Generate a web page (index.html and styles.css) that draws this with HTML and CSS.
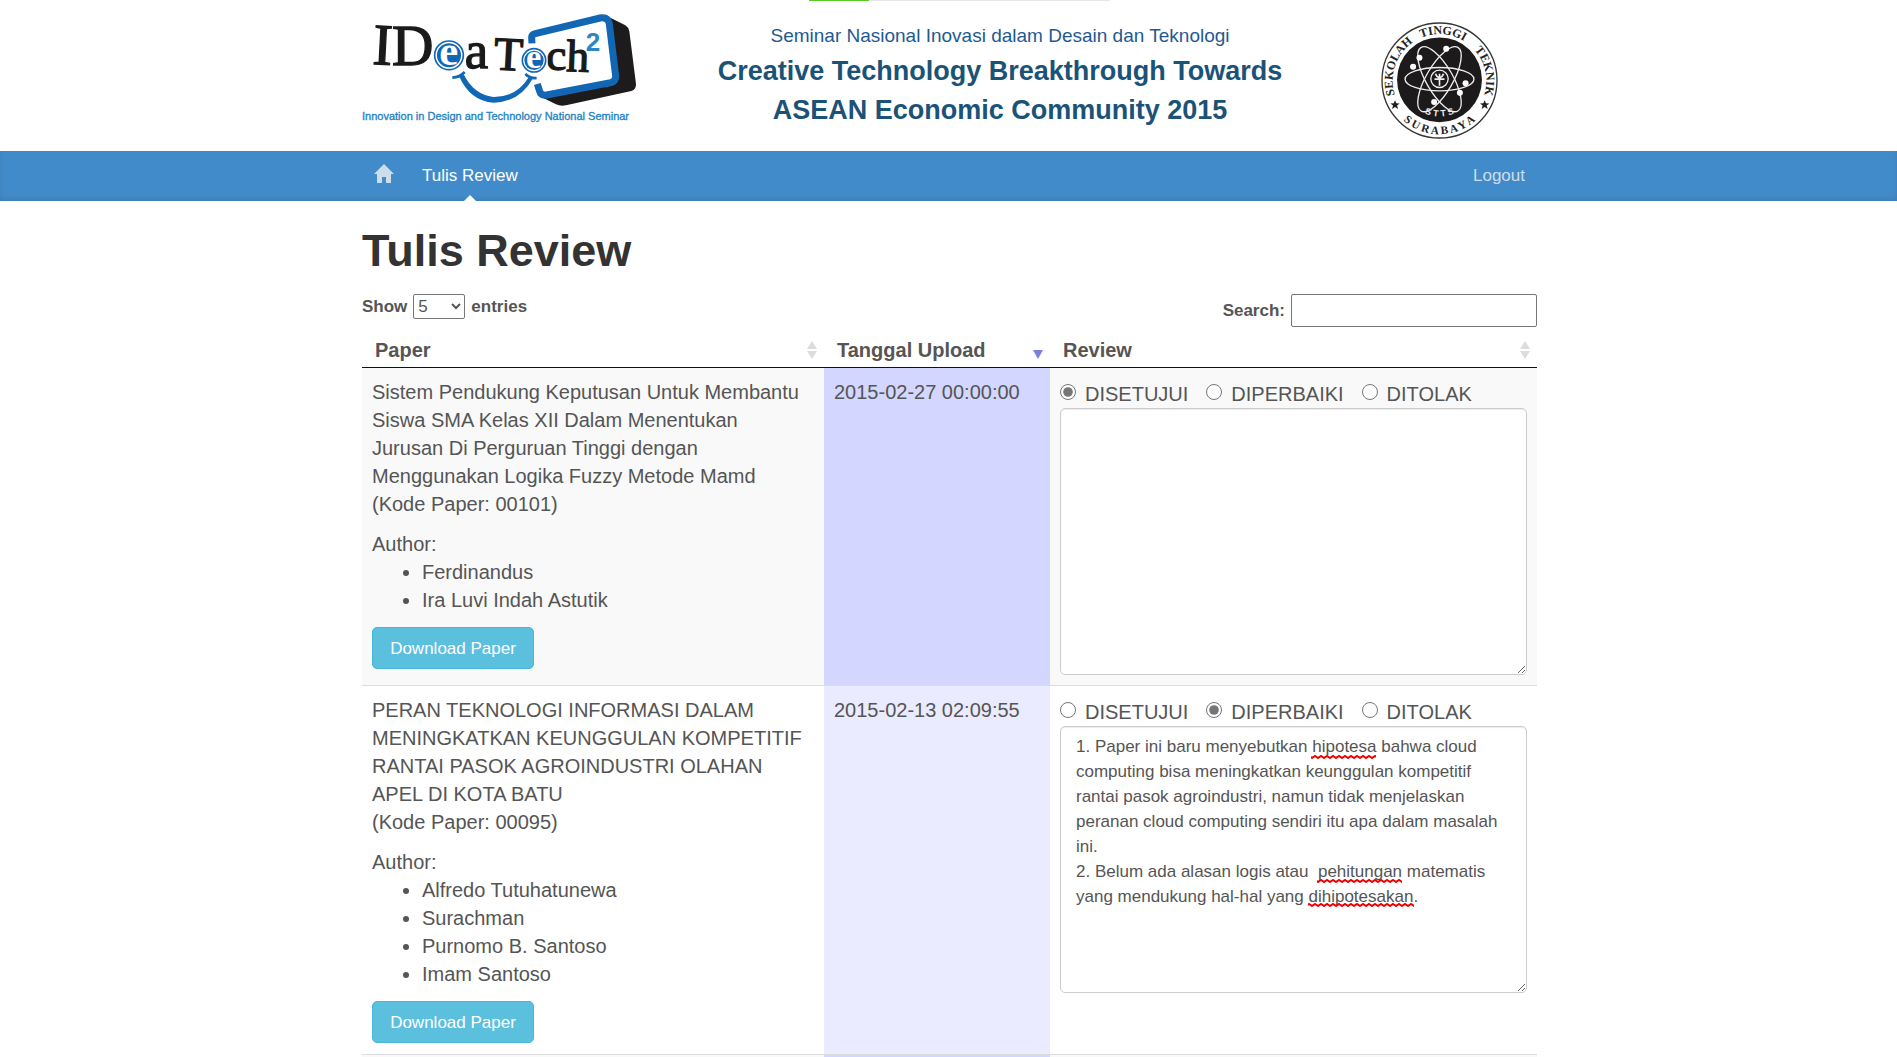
FILE: index.html
```html
<!DOCTYPE html>
<html lang="id">
<head>
<meta charset="utf-8">
<meta name="viewport" content="width=device-width, initial-scale=1">
<title>Tulis Review</title>
<link rel="stylesheet" href="styles.css">
</head>
<body>
<div class="loader"><div class="loader-fill"></div></div>

<header class="container masthead">
  <svg class="logo" viewBox="36 0 840 405" role="img" aria-label="IDeaTech 2">
    <path d="M778 52 L826 76 Q836 82 838 94 L858 252 Q859 268 844 273 L648 316 Q632 320 618 313 L560 284 L780 258 Z" fill="#1d1b1c"/>
    <path d="M544 132 L540 108 Q540 98 552 95 L748 47 Q780 42 785 66 L805 228 Q806 250 788 255 L588 293 Q570 296 564 280 L556 254" fill="#fff"/>
    <path d="M546 130 L545 112 Q545 104 556 101 L750 54 Q774 50 778 72 L797 228 Q798 244 782 248 L590 285 Q574 288 569 274 L562 252" fill="none" stroke="#1167b4" stroke-width="21"/>
    <g class="logo-serif" fill="#1a1a1a" stroke="#1a1a1a" stroke-width="4">
      <text x="66" y="192" font-size="176" transform="rotate(3 66 194)">I</text>
      <text x="126" y="196" font-size="172">D</text>
      <text x="344" y="203" font-size="158">a</text>
      <text x="430" y="208" font-size="142" transform="rotate(3 428 210)">T</text>
      <text x="589" y="211" font-size="136">c</text>
      <text x="648" y="213" font-size="136" transform="rotate(2 646 215)">h</text>
    </g>
    <circle cx="297" cy="166" r="49" fill="#fff"/>
    <circle cx="297" cy="166" r="43" fill="#fff" stroke="#1167b4" stroke-width="5"/>
    <circle cx="297" cy="166" r="36" fill="#1167b4"/>
    <circle cx="552" cy="181" r="41" fill="#fff"/>
    <circle cx="552" cy="181" r="35" fill="#fff" stroke="#1167b4" stroke-width="5"/>
    <circle cx="552" cy="181" r="29" fill="#1167b4"/>
    <g class="logo-serif" fill="#fff" text-anchor="middle" font-weight="bold">
      <text x="296" y="196" font-size="128">e</text>
      <text x="551" y="205" font-size="104">e</text>
    </g>
    <text class="logo-sans" x="707" y="152" font-size="78" font-weight="bold" fill="#2a86c4">2</text>
    <path d="M307 233 Q330 232 344 216 M526 222 Q540 236 560 234" fill="none" stroke="#1167b4" stroke-width="8"/>
    <path d="M328 230 Q360 302 430 308 Q508 307 548 236 L536 232 Q500 292 430 291 Q370 282 342 224Z" fill="#1167b4"/>
    <text class="logo-sans" x="36" y="361" font-size="33" fill="#2583c5" stroke="#2583c5">Innovation in Design and Technology National Seminar</text>
  </svg>

  <div class="event">
    <p class="event-kind">Seminar Nasional Inovasi dalam Desain dan Teknologi</p>
    <p class="event-title">Creative Technology Breakthrough Towards<br>ASEAN Economic Community 2015</p>
  </div>

  <svg class="seal" viewBox="30 34 356 356" role="img" aria-label="Sekolah Tinggi Teknik Surabaya">
    <defs>
      <path id="ring-top" d="M76 260 A140 140 0 1 1 340 260"/>
      <path id="ring-bottom" d="M76 304 A161 161 0 0 0 340 304"/>
      <path id="ring-inner" d="M135 292 A110 110 0 0 0 281 292"/>
    </defs>
    <circle cx="208" cy="212" r="172" fill="#fff" stroke="#333" stroke-width="4"/>
    <circle cx="208" cy="210" r="127" fill="#1d1a1b"/>
    <g class="seal-text" fill="#222">
      <text font-size="36"><textPath href="#ring-top" startOffset="1%">SEKOLAH</textPath></text>
      <text font-size="36" text-anchor="middle"><textPath href="#ring-top" startOffset="52%">TINGGI</textPath></text>
      <text font-size="36" text-anchor="end"><textPath href="#ring-top" startOffset="99%">TEKNIK</textPath></text>
      <text font-size="34" text-anchor="middle"><textPath href="#ring-bottom" startOffset="50%">S U R A B A Y A</textPath></text>
    </g>
    <path d="M75 271l4 9 10 1-8 6 3 10-9-6-9 6 3-10-8-6 10-1zM343 271l4 9 10 1-8 6 3 10-9-6-9 6 3-10-8-6 10-1z" fill="#222"/>
    <g fill="none" stroke="#eee" stroke-width="4">
      <ellipse cx="208" cy="208" rx="103" ry="35"/>
      <ellipse cx="208" cy="208" rx="110" ry="40" transform="rotate(60 208 208)"/>
      <ellipse cx="208" cy="208" rx="110" ry="40" transform="rotate(-60 208 208)"/>
      <circle cx="208" cy="207" r="26" fill="#1d1a1b"/>
      <path d="M196 192 Q200 203 208 204 Q216 203 220 192 M208 192V228 M193 208H223" stroke-width="5"/>
    </g>
    <g fill="#fff">
      <circle cx="228" cy="117" r="9"/><circle cx="148" cy="144" r="9"/><circle cx="129" cy="171" r="9"/>
      <circle cx="286" cy="220" r="9"/><circle cx="269" cy="249" r="9"/><circle cx="192" cy="276" r="9"/>
    </g>
    <text class="logo-sans" font-size="27" font-weight="bold" fill="#eee" text-anchor="middle"><textPath href="#ring-inner" startOffset="50%">S T T S</textPath></text>
  </svg>
</header>

<nav class="navbar">
  <div class="container navbar-inner">
    <a class="nav-item" href="#" aria-label="Home">
      <svg class="home-icon" viewBox="0 0 20 20" aria-hidden="true"><path d="M10 0L20 10H17V19H12V13H8V19H3V10H0Z" fill="currentColor"/></svg>
    </a>
    <a class="nav-item active" href="#" aria-current="page">Tulis Review</a>
    <a class="nav-item logout" href="#">Logout</a>
  </div>
</nav>

<main class="container">
  <h1>Tulis Review</h1>

  <div class="controls">
    <label class="length">Show
      <select><option>5</option><option>10</option><option>25</option><option>50</option></select>
      entries</label>
    <label class="search">Search: <input type="search"></label>
  </div>

  <table class="papers">
    <colgroup><col class="col-paper"><col class="col-date"><col class="col-review"></colgroup>
    <thead>
      <tr>
        <th scope="col"><div class="th">Paper <svg class="sort" viewBox="0 0 10 18" aria-hidden="true"><path d="M5 0L10 8H0ZM0 10H10L5 18Z"/></svg></div></th>
        <th scope="col" aria-sort="descending"><div class="th">Tanggal Upload <svg class="sort sorted" viewBox="0 0 10 18" aria-hidden="true"><path d="M0 9H10L5 18Z"/></svg></div></th>
        <th scope="col"><div class="th">Review <svg class="sort" viewBox="0 0 10 18" aria-hidden="true"><path d="M5 0L10 8H0ZM0 10H10L5 18Z"/></svg></div></th>
      </tr>
    </thead>
    <tbody>
      <tr>
        <td>
          <p class="paper-title">Sistem Pendukung Keputusan Untuk Membantu Siswa SMA Kelas XII Dalam Menentukan Jurusan Di Perguruan Tinggi dengan Menggunakan Logika Fuzzy Metode Mamd<br>(Kode Paper: 00101)</p>
          Author:
          <ul class="authors">
            <li>Ferdinandus</li>
            <li>Ira Luvi Indah Astutik</li>
          </ul>
          <button class="btn" type="button">Download Paper</button>
        </td>
        <td class="date">2015-02-27 00:00:00</td>
        <td>
          <div class="choices">
            <label><input type="radio" name="status-101" checked>DISETUJUI</label>
            <label><input type="radio" name="status-101">DIPERBAIKI</label>
            <label><input type="radio" name="status-101">DITOLAK</label>
          </div>
          <div class="note"><textarea aria-label="Review paper 00101"></textarea></div>
        </td>
      </tr>
      <tr>
        <td>
          <p class="paper-title">PERAN TEKNOLOGI INFORMASI DALAM MENINGKATKAN KEUNGGULAN KOMPETITIF RANTAI PASOK AGROINDUSTRI OLAHAN APEL DI KOTA BATU<br>(Kode Paper: 00095)</p>
          Author:
          <ul class="authors">
            <li>Alfredo Tutuhatunewa</li>
            <li>Surachman</li>
            <li>Purnomo B. Santoso</li>
            <li>Imam Santoso</li>
          </ul>
          <button class="btn" type="button">Download Paper</button>
        </td>
        <td class="date">2015-02-13 02:09:55</td>
        <td>
          <div class="choices">
            <label><input type="radio" name="status-95">DISETUJUI</label>
            <label><input type="radio" name="status-95" checked>DIPERBAIKI</label>
            <label><input type="radio" name="status-95">DITOLAK</label>
          </div>
          <div class="note">
            <textarea aria-label="Review paper 00095" spellcheck="false">1. Paper ini baru menyebutkan hipotesa bahwa cloud computing bisa meningkatkan keunggulan kompetitif rantai pasok agroindustri, namun tidak menjelaskan peranan cloud computing sendiri itu apa dalam masalah ini.
2. Belum ada alasan logis atau  pehitungan matematis yang mendukung hal-hal yang dihipotesakan.</textarea>
            <svg class="spelling" viewBox="0 0 467 267" aria-hidden="true">
              <defs><pattern id="wave" width="6" height="4" y="1" patternUnits="userSpaceOnUse"><path d="M-1 4L0 3L3 1L6 3L7 4" fill="none" stroke="#e00" stroke-width="2"/></pattern></defs>
              <g fill="url(#wave)">
                <rect x="251" y="29" width="65" height="4"/>
                <rect x="257" y="153" width="85" height="4"/>
                <rect x="248" y="177" width="106" height="4"/>
              </g>
            </svg>
          </div>
        </td>
      </tr>
      <tr class="next-row"><td></td><td class="date"></td><td></td></tr>
    </tbody>
  </table>
</main>
</body>
</html>
```
FILE: styles.css
```css
* { box-sizing: border-box; }

body {
  margin: 0;
  background: #fff;
  color: #555;
  font: 20px/28px "Liberation Sans", Arial, sans-serif;
}

.container {
  max-width: 1207px;
  margin: 0 auto;
  padding: 0 15px 0 17px;
}

/* page loading bar, over the masthead */
.loader {
  position: absolute;
  top: 0;
  left: 0;
  right: 0;
  width: 301px;
  height: 1px;
  margin: 0 auto;
  transform: translateX(11px);
  background: #e6e6e6;
}
.loader-fill { width: 20%; height: 1px; background: #5c2; }

.masthead {
  display: grid;
  grid-template-columns: 280px 1fr 119px;
  min-height: 151px;
  padding-right: 53px;
}
.logo { width: 280px; height: 135px; }
.logo-serif { font-family: "Liberation Serif", serif; }
.logo-sans { font-family: "Liberation Sans", sans-serif; }
.event { padding: 22px 22px 0 0; text-align: center; }
.event p { margin: 0; }
.event-kind { color: #1f5a93; font-size: 19px; line-height: 28px; }
.event .event-title { margin-top: 2px; color: #1b5277; font-size: 27px; line-height: 39px; font-weight: bold; }
.seal { width: 119px; height: 119px; margin-top: 21px; }
.seal-text { font-family: "Liberation Serif", serif; font-weight: bold; }

.navbar { background: #428bca; box-shadow: inset 0 -2px 5px rgba(0, 0, 0, .1); }
.navbar-inner { display: flex; }
.nav-item {
  position: relative;
  padding: 12px 12px 13px;
  color: #cdddeb;
  font-size: 17px;
  line-height: 25px;
  text-decoration: none;
}
.home-icon { display: block; width: 20px; height: 20px; margin: 1px 4px 0 0; }
.nav-item.active { color: #fff; }
.nav-item.active::after {
  content: "";
  position: absolute;
  bottom: 0;
  left: 50%;
  margin-left: -6px;
  border: 6px solid transparent;
  border-top: 0;
  border-bottom-color: #fff;
}
.logout { margin-left: auto; }

h1 {
  margin: 0;
  padding-top: 25px;
  color: #333;
  font-size: 45px;
  line-height: 50px;
}

.controls {
  display: flex;
  justify-content: space-between;
  align-items: flex-start;
  padding-top: 18px;
  font-size: 17px;
  line-height: 25px;
  font-weight: bold;
}
.length, .search { display: flex; align-items: center; gap: 6px; }
select {
  width: 52px;
  height: 25px;
  color: #555;
  background: #fff;
  border: 1px solid #767676;
  border-radius: 2px;
  font: 17px "Liberation Sans", Arial, sans-serif;
}
.search input {
  width: 246px;
  height: 33px;
  border: 1px solid #767676;
  border-radius: 2px;
  background: #fff;
  font: inherit;
}

.papers {
  width: 100%;
  margin-top: 4px;
  table-layout: fixed;
  border-collapse: separate;
  border-spacing: 0;
}
.col-paper { width: 462px; }
.col-date { width: 226px; }
.papers th { padding: 0; border-bottom: 1px solid #111; text-align: left; }
.th {
  display: flex;
  justify-content: space-between;
  align-items: center;
  padding: 5px 7px 3px 13px;
}
.sort { width: 10px; height: 18px; fill: #dcdcdc; }
.sort.sorted { fill: #7b80e0; }

.papers td { padding: 10px; vertical-align: top; }
.papers tr + tr td { border-top: 1px solid #ddd; }
.papers tbody tr:nth-child(odd) td { background: #f9f9f9; }
.papers tbody td.date { background: #eaebff; }
.papers tbody tr:nth-child(odd) td.date { background: #d3d6ff; }
.papers .next-row td { height: 3px; padding: 0; }

.paper-title { margin: 0 0 12px; }
.authors { margin: 0 0 13px; padding-left: 50px; }
.btn {
  display: block;
  width: 162px;
  height: 42px;
  margin-bottom: 1px;
  padding: 0;
  color: #fff;
  background: #5bc0de;
  border: 1px solid #46b8da;
  border-radius: 5px;
  font: 17px/25px "Liberation Sans", Arial, sans-serif;
}

.choices { display: flex; gap: 18px; height: 30px; padding-top: 2px; }
.choices label { display: flex; align-items: center; gap: 9px; }
.choices input { width: 16px; height: 16px; margin: 0 0 4px; accent-color: #767676; }

.note { position: relative; }
.note textarea {
  display: block;
  width: 100%;
  height: 267px;
  padding: 7px 15px;
  color: #555;
  background: #fff;
  border: 1px solid #ccc;
  border-radius: 5px;
  box-shadow: inset 0 1px 1px rgba(0, 0, 0, .08);
  font: 17px/25px "Liberation Sans", Arial, sans-serif;
  resize: vertical;
}
/* spelling marks, over the text of the note */
.spelling {
  position: absolute;
  top: 0;
  left: 0;
  width: 467px;
  height: 267px;
  pointer-events: none;
}
```
